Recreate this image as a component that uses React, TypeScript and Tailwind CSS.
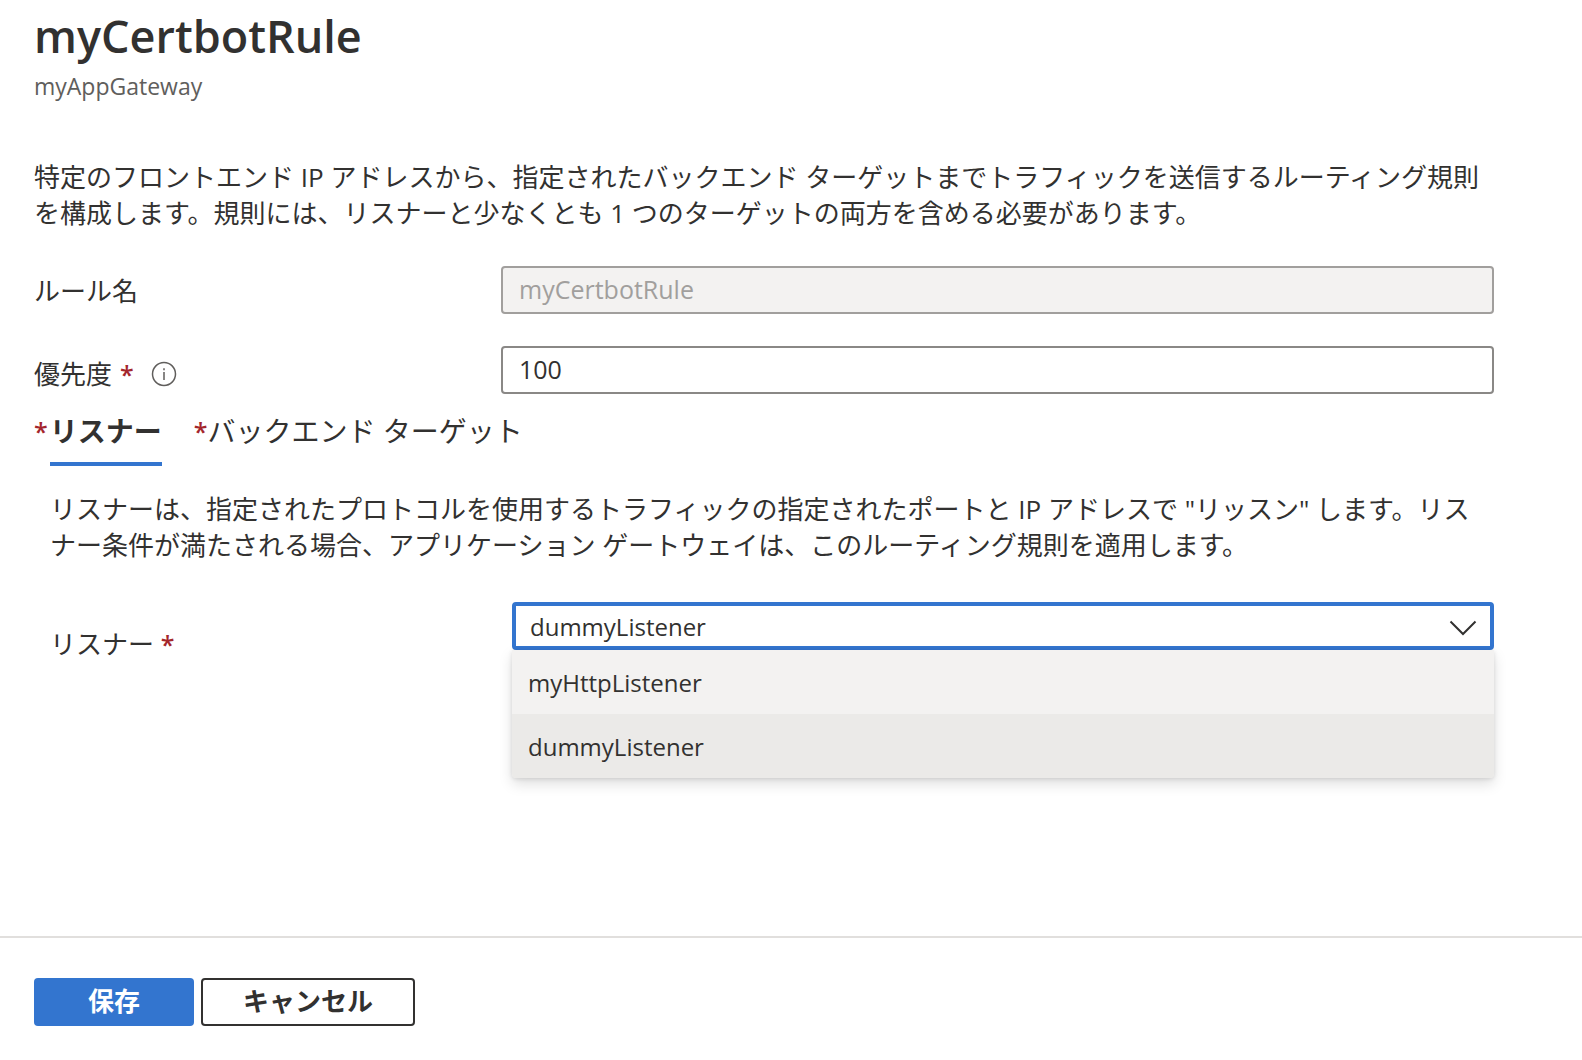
import { useState } from "react";
import type { ReactNode } from "react";

function Required() {
  return <span className="text-[25px] font-semibold text-[#a4262c]">*</span>;
}

function InfoIcon() {
  return (
    <svg viewBox="0 0 26 26" className="size-[26px]" fill="none" aria-hidden="true">
      <circle cx="13" cy="13" r="11.5" stroke="#605e5c" strokeWidth="1.5" />
      <path d="M13 11v8M13 7.2v2" stroke="#605e5c" strokeWidth="1.5" />
    </svg>
  );
}

type FieldProps = { id: string; label: string; required?: boolean; children: ReactNode };

function Field({ id, label, required, children }: FieldProps) {
  return (
    <div className="flex items-center">
      <label
        htmlFor={id}
        className={`flex w-[467px] shrink-0 items-center ${required ? "pt-2" : "pt-0.5"}`}
      >
        {label}
        {required && (
          <>
            <span className="ml-2">
              <Required />
            </span>
            <span className="ml-[17px]">
              <InfoIcon />
            </span>
          </>
        )}
      </label>
      {children}
    </div>
  );
}

const listeners = ["myHttpListener", "dummyListener"];

export default function App() {
  const [priority, setPriority] = useState("100");
  const [listener, setListener] = useState("dummyListener");

  return (
    <div className="flex min-h-screen flex-col bg-white font-['Open_Sans','Noto_Sans_CJK_JP',sans-serif] text-[26px] leading-9 text-[#323130]">
      <header className="px-[34px] pt-1">
        <h1 className="text-[45px] leading-[64px] font-semibold">myCertbotRule</h1>
        <p className="text-[23px] leading-9 text-[#605e5c]">myAppGateway</p>
      </header>

      <main className="pt-[55px] pr-[88px] pl-[34px]">
        <p>
          特定のフロントエンド IP アドレスから、指定されたバックエンド ターゲットまでトラフィックを送信するルーティング規則を構成します。規則には、リスナーと少なくとも 1 つのターゲットの両方を含める必要があります。
        </p>

        <form className="mt-[35px] flex flex-col gap-8">
          <Field id="rule-name" label="ルール名">
            <input
              id="rule-name"
              disabled
              defaultValue="myCertbotRule"
              className="h-12 min-w-0 flex-1 rounded-[4px] border-2 border-[#a19f9d] bg-[#f3f2f1] px-4 pb-0.5 text-[25px] text-[#a19f9d]"
            />
          </Field>
          <Field id="priority" label="優先度" required>
            <input
              id="priority"
              value={priority}
              onChange={(e) => setPriority(e.target.value)}
              className="h-12 min-w-0 flex-1 rounded-[4px] border-2 border-[#8a8886] bg-white px-4 pb-0.5 text-[25px]"
            />
          </Field>
        </form>

        <div role="tablist" className="mt-[19px] flex gap-8 text-[28px]">
          <button role="tab" aria-selected="true" className="flex gap-0.5">
            <Required />
            <span className="border-b-4 border-[#3375cf] pb-[13px] font-bold">リスナー</span>
          </button>
          <button role="tab" aria-selected="false" className="flex">
            <Required />
            <span>バックエンド ターゲット</span>
          </button>
        </div>

        <section className="pt-[25px] pl-4">
          <p>
            リスナーは、指定されたプロトコルを使用するトラフィックの指定されたポートと IP アドレスで "リッスン" します。リスナー条件が満たされる場合、アプリケーション ゲートウェイは、このルーティング規則を適用します。
          </p>
          <div className="mt-[39px] flex items-start">
            <label htmlFor="listener" className="w-[462px] shrink-0 pt-6">
              リスナー <Required />
            </label>
            <div className="relative min-w-0 flex-1">
              <select
                id="listener"
                value={listener}
                onChange={(e) => setListener(e.target.value)}
                className="block h-12 w-full appearance-none rounded-[4px] border-4 border-[#3375cf] bg-white px-[14px] pt-0.5 text-[24px] leading-9 outline-none"
              >
                {listeners.map((name) => (
                  <option key={name}>{name}</option>
                ))}
              </select>
              <svg viewBox="0 0 28 16" className="pointer-events-none absolute top-[18px] right-[17px] h-4 w-7" fill="none" aria-hidden="true">
                <path d="M1.5 1.5 14 14 26.5 1.5" stroke="#323130" strokeWidth="2" />
              </svg>
              <ul
                role="listbox"
                className="absolute top-full left-0 w-full overflow-hidden rounded-b-[4px] bg-[#f3f2f1] text-[24px] shadow-[0_6px_14px_rgba(0,0,0,0.13),0_1px_4px_rgba(0,0,0,0.11)]"
              >
                {listeners.map((name) => (
                  <li
                    key={name}
                    role="option"
                    aria-selected={name === listener}
                    onClick={() => setListener(name)}
                    className="flex h-16 items-center px-4 pt-0.5 aria-selected:bg-[#ebeae8]"
                  >
                    {name}
                  </li>
                ))}
              </ul>
            </div>
          </div>
        </section>
      </main>

      <footer className="mt-auto flex gap-[7px] border-t-2 border-[#e1dfdd] px-[34px] pt-10 pb-[34px] font-bold">
        <button className="h-12 w-40 rounded-[4px] bg-[#3375cf] pb-0.5 text-white">保存</button>
        <button className="h-12 rounded-[4px] border-2 border-[#323130] px-10 pb-0.5">キャンセル</button>
      </footer>
    </div>
  );
}
